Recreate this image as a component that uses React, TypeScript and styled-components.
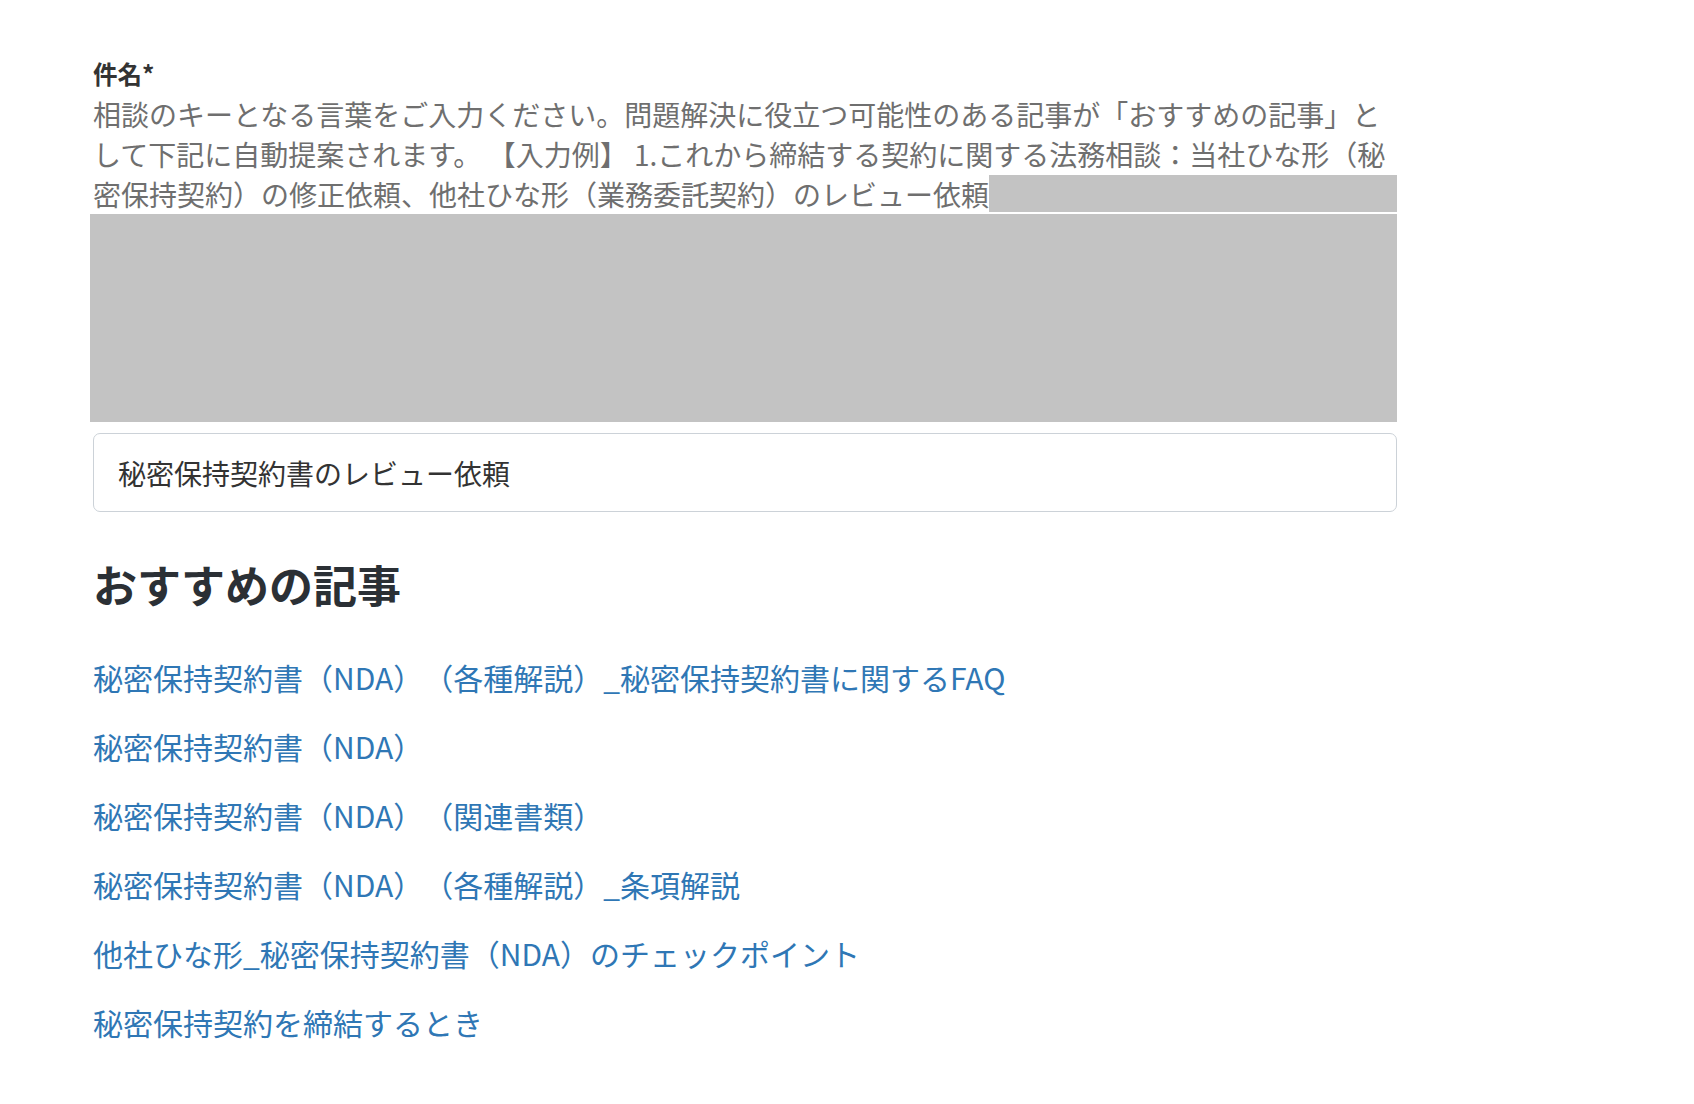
import React from "react";
import styled, {createGlobalStyle} from "styled-components";

const GlobalStyle = createGlobalStyle`
    html, body {
        margin: 0;
        padding: 0;
        background: #ffffff;
    }
    body {
        font-family: "Noto Sans CJK JP", "Noto Sans", sans-serif;
        text-spacing-trim: space-all;
    }
`;

const Page = styled.div`
    width: 1307px;
    padding: 54px 0 40px 90px;
`;

const FieldLabel = styled.label`
    display: block;
    padding-left: 3px;
    font-size: 24.5px;
    line-height: 40px;
    font-weight: 700;
    color: #333333;
`;

const HelpText = styled.div`
    display: flex;
    flex-direction: column;
    padding-left: 3px;
    font-size: 28px;
    line-height: 40px;
    color: #6f6f6f;
`;

const HelpLine = styled.div`
    display: flex;
    align-items: flex-start;
    white-space: nowrap;
`;

const Highlight = styled.span`
    flex: 1;
    height: 37px;
    margin-top: 1px;
    background: #c3c3c3;
`;

const HighlightBlock = styled.div<{ $height: number }>`
    height: ${p => p.$height}px;
    margin-top: 0;
    background: #c3c3c3;
`;

const TextInput = styled.input`
    box-sizing: border-box;
    display: block;
    width: calc(100% - 3px);
    height: 79px;
    margin: 11px 0 0 3px;
    padding: 0 24px;
    border: 1px solid #ccd2d8;
    border-radius: 7px;
    font-family: "Noto Sans CJK JP", "Noto Sans", sans-serif;
    font-size: 28px;
    color: #333333;
    background: #ffffff;
    outline: none;
`;

const SectionTitle = styled.h2`
    margin: 46px 0 46px 3px;
    font-size: 44px;
    line-height: 52px;
    font-weight: 700;
    color: #2b3035;
`;

const ArticleList = styled.ul`
    list-style: none;
    margin: 0;
    padding: 0 0 0 3px;
    display: flex;
    flex-direction: column;
    gap: 27px;
`;

const ArticleLink = styled.a`
    display: inline-block;
    font-size: 30px;
    line-height: 42px;
    color: #2f77b5;
    text-decoration: none;
    white-space: nowrap;
`;

const helpLines = [
    "相談のキーとなる言葉をご入力ください。問題解決に役立つ可能性のある記事が「おすすめの記事」と",
    "して下記に自動提案されます。 【入力例】 1.これから締結する契約に関する法務相談：当社ひな形（秘",
    "密保持契約）の修正依頼、他社ひな形（業務委託契約）のレビュー依頼",
];

const articles = [
    "秘密保持契約書（NDA）（各種解説）_秘密保持契約書に関するFAQ",
    "秘密保持契約書（NDA）",
    "秘密保持契約書（NDA）（関連書類）",
    "秘密保持契約書（NDA）（各種解説）_条項解説",
    "他社ひな形_秘密保持契約書（NDA）のチェックポイント",
    "秘密保持契約を締結するとき",
];

const App = () => {
    return (
        <>
            <GlobalStyle />
            <Page>
                <FieldLabel htmlFor="subject">件名*</FieldLabel>
                <HelpText>
                    {helpLines.map((line, i) => (
                        <HelpLine key={i}>
                            <span>{line}</span>
                            {i === helpLines.length - 1 && <Highlight />}
                        </HelpLine>
                    ))}
                </HelpText>
                <HighlightBlock $height={208} />
                <TextInput id="subject" defaultValue="秘密保持契約書のレビュー依頼" />
                <SectionTitle>おすすめの記事</SectionTitle>
                <ArticleList>
                    {articles.map(title => (
                        <li key={title}>
                            <ArticleLink href="#">{title}</ArticleLink>
                        </li>
                    ))}
                </ArticleList>
            </Page>
        </>
    );
};

export default App;
